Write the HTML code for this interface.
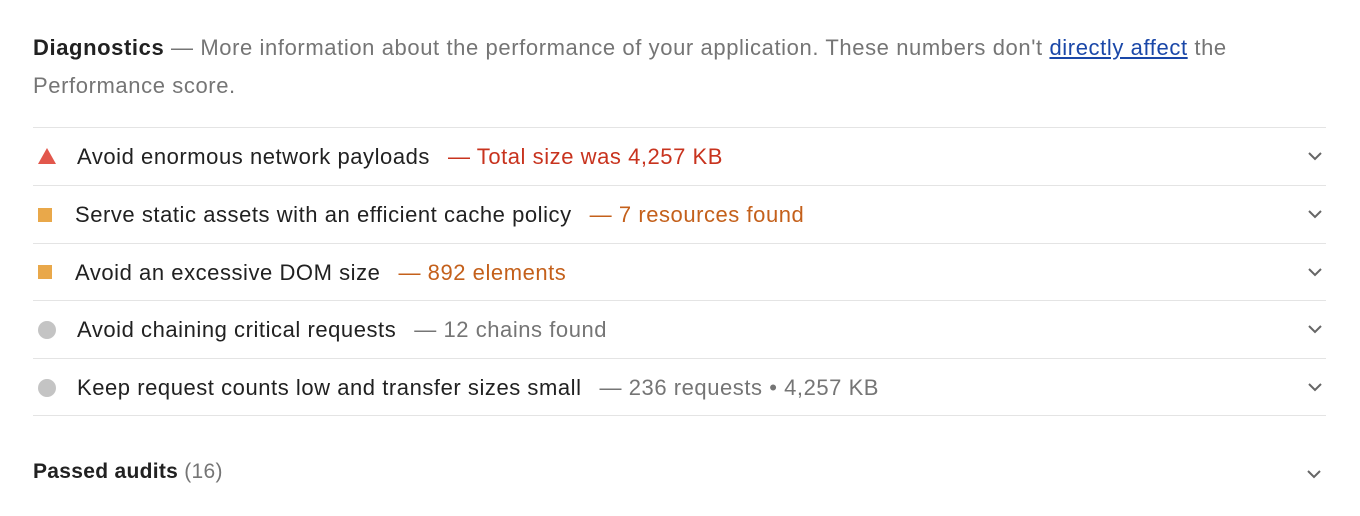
<!DOCTYPE html>
<html><head><style>
body{margin:0;background:#fff;font-family:"Liberation Sans",Arial,sans-serif;width:1360px;height:516px;overflow:hidden;color:#212121}
.desc{position:absolute;left:33px;top:29px;width:1240px;font-size:22px;letter-spacing:0.6px;line-height:38px;color:#757575}
.desc b{color:#212121}
.desc a{color:#1a47a8;text-decoration:underline}
.row{position:absolute;left:33px;width:1293px;height:57px;border-top:1px solid #e4e4e4;font-size:22px;letter-spacing:0.55px;line-height:57px}
.row .t{position:absolute;left:44px;top:0;white-space:nowrap}
.d{margin-left:18px}
.red{color:#c8331e}.or{color:#c4601b}.gr{color:#757575}
.ic{position:absolute}
.chev{position:absolute;right:3px;top:22px}
.last{position:absolute;left:33px;width:1293px;top:415px;border-top:1px solid #e4e4e4}
</style></head><body>
<div class="desc"><b>Diagnostics</b> — More information about the performance of your application. These numbers don't <a>directly affect</a> the Performance score.</div>

<div class="row" style="top:127px"><svg class="ic" style="left:5px;top:20px" width="18" height="16"><polygon points="9,0 18,16 0,16" fill="#e2574c"/></svg><span class="t">Avoid enormous network payloads<span class="d red">— Total size was 4,257 KB</span></span><svg class="chev" width="16" height="12" viewBox="0 0 16 12"><path d="M2 3l6 6 6-6" fill="none" stroke="#666" stroke-width="2"/></svg></div>
<div class="row" style="top:185px"><div class="ic" style="left:5px;top:22px;width:14px;height:14px;background:#e9a84a"></div><span class="t" style="left:42px">Serve static assets with an efficient cache policy<span class="d or">— 7 resources found</span></span><svg class="chev" width="16" height="12" viewBox="0 0 16 12"><path d="M2 3l6 6 6-6" fill="none" stroke="#666" stroke-width="2"/></svg></div>
<div class="row" style="top:243px"><div class="ic" style="left:5px;top:21px;width:14px;height:14px;background:#e9a84a"></div><span class="t" style="left:42px">Avoid an excessive DOM size<span class="d or">— 892 elements</span></span><svg class="chev" width="16" height="12" viewBox="0 0 16 12"><path d="M2 3l6 6 6-6" fill="none" stroke="#666" stroke-width="2"/></svg></div>
<div class="row" style="top:300px"><div class="ic" style="left:5px;top:20px;width:18px;height:18px;border-radius:50%;background:#c4c4c4"></div><span class="t">Avoid chaining critical requests<span class="d gr">— 12 chains found</span></span><svg class="chev" width="16" height="12" viewBox="0 0 16 12"><path d="M2 3l6 6 6-6" fill="none" stroke="#666" stroke-width="2"/></svg></div>
<div class="row" style="top:358px"><div class="ic" style="left:5px;top:20px;width:18px;height:18px;border-radius:50%;background:#c4c4c4"></div><span class="t">Keep request counts low and transfer sizes small<span class="d gr">— 236 requests • 4,257 KB</span></span><svg class="chev" width="16" height="12" viewBox="0 0 16 12"><path d="M2 3l6 6 6-6" fill="none" stroke="#666" stroke-width="2"/></svg></div>
<div class="last"></div>
<div style="position:absolute;left:33px;top:460px;font-size:21px;letter-spacing:0.3px;font-weight:bold;color:#212121">Passed audits <span style="font-weight:normal;color:#757575">(16)</span></div>
<svg style="position:absolute;left:1306px;top:468px" width="16" height="12" viewBox="0 0 16 12"><path d="M2 3l6 6 6-6" fill="none" stroke="#666" stroke-width="2"/></svg>
</body></html>
